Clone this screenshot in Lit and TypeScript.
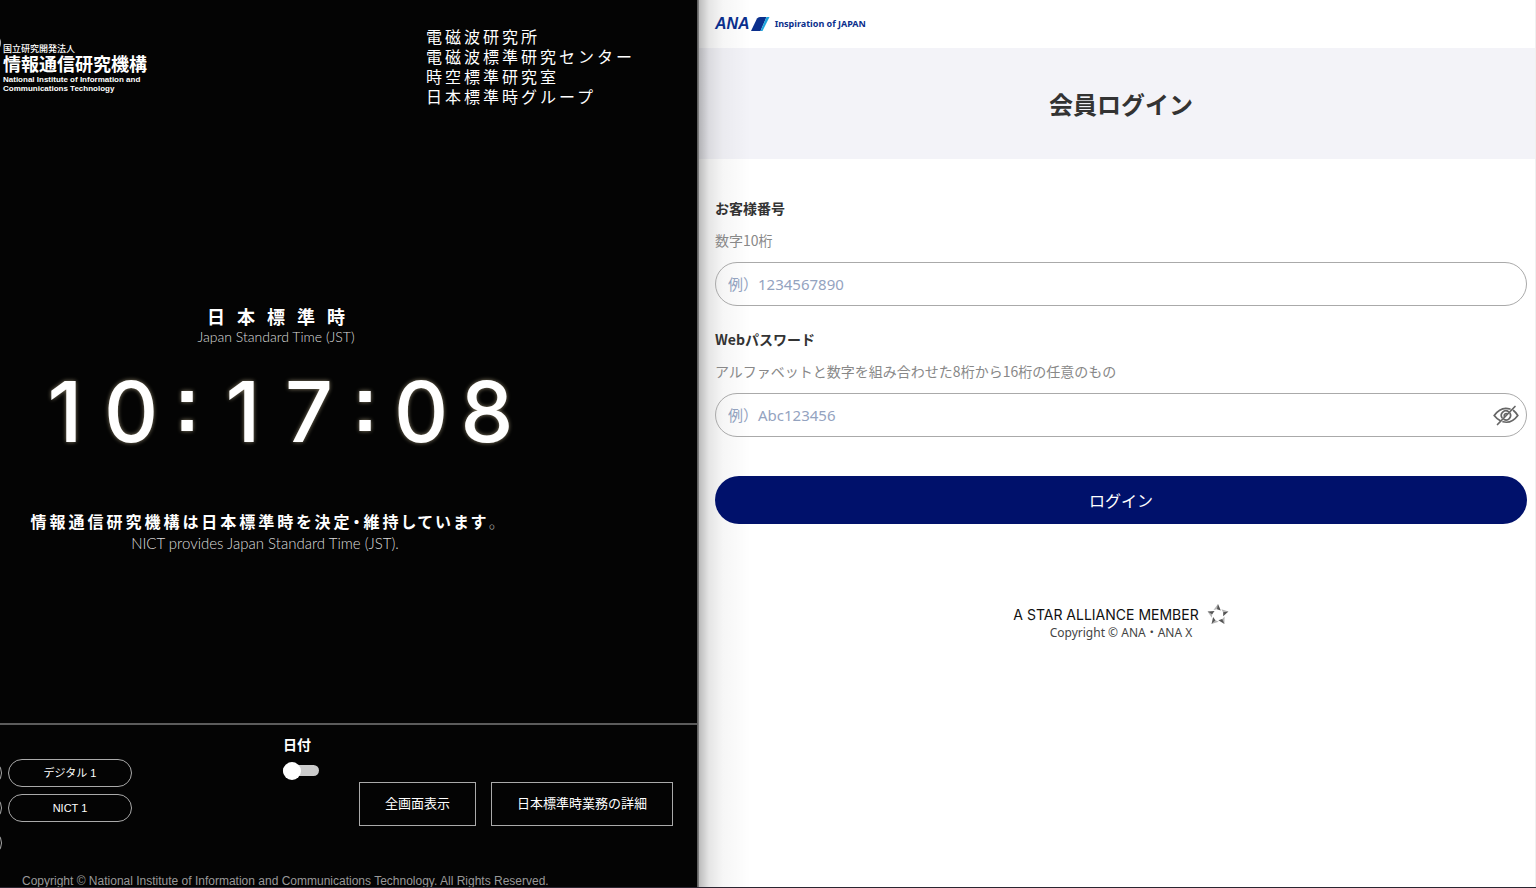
import { LitElement, html, css, svg } from "lit";
import { customElement, state } from "lit/decorators.js";

@customElement("jst-clock")
class JstClock extends LitElement {
  @state() private time = "10:17:08";

  static styles = css`
    :host {
      display: flex;
      flex-direction: column;
      min-width: 0;
      overflow: hidden;
      background: #040404;
      color: #fff;
      font-family: "Liberation Sans", "Noto Sans CJK JP", sans-serif;
    }
    * { box-sizing: border-box; }
    p, h1 { margin: 0; font-weight: 400; }
    header {
      display: flex;
      justify-content: space-between;
      align-items: flex-start;
      padding: 28px 62px 23px 0;
    }
    .brand { display: flex; gap: 1px; padding-top: 8px; }
    .arc { display: block; width: 2px; height: 16px; }
    .brand-text { padding-top: 8px; font-weight: 700; }
    .kind { font: 500 9px/11px "Liberation Sans", "Noto Sans CJK JP", sans-serif; }
    .name { font: 700 18px/20px "Liberation Sans", "Noto Sans CJK JP", sans-serif; }
    .en { font-size: 8px; line-height: 9px; font-weight: 700; }
    .dept {
      margin: 0;
      padding: 0;
      list-style: none;
      font: 400 16px/20px "Liberation Sans", "Noto Sans CJK JP", sans-serif;
      letter-spacing: 3px;
    }
    .stage {
      flex: 1;
      width: 552px;
      display: flex;
      flex-direction: column;
      justify-content: center;
      text-align: center;
    }
    .title {
      padding: 3px 0 0 12px;
      font: 700 18px/24px "Noto Sans CJK JP", sans-serif;
      letter-spacing: 12px;
    }
    .sub { font: 300 14px/18px Lato, sans-serif; color: #ddd; }
    .time {
      display: flex;
      justify-content: center;
      padding: 14px 0 45px;
      font: 500 84px/104px Inter, sans-serif;
      text-shadow: 0 0 4px #8a8068;
    }
    .digit { width: 66px; }
    .colon {
      width: 46px;
      font: 700 80px/88px "Liberation Sans", sans-serif;
    }
    .note { padding-right: 22px; }
    .note-ja {
      font: 700 16px/24px "Noto Sans CJK JP", sans-serif;
      letter-spacing: 3px;
      font-feature-settings: "palt";
    }
    .stop { font-weight: 300; color: #aaa; }
    .note-en { font: 300 15px/20px Lato, sans-serif; color: #ddd; }
    footer {
      border-top: 2px solid #5c5c5c;
      height: 164px;
      display: flex;
      flex-direction: column;
      justify-content: space-between;
    }
    .controls {
      display: flex;
      padding: 9px 24px 0 0;
    }
    .pills {
      display: grid;
      grid-template-columns: 124px 124px;
      grid-auto-rows: 28px;
      gap: 7px 6px;
      margin: 25px 0 0 -122px;
    }
    button {
      background: transparent;
      color: #fff;
      border: 1px solid #aaa;
      padding: 0;
    }
    .pill {
      border-radius: 14px;
      font: 400 11px/20px "Liberation Sans", "Noto Sans CJK JP", sans-serif;
    }
    .date {
      display: flex;
      flex-direction: column;
      align-items: flex-start;
      gap: 11px;
      margin-left: 151px;
      font: 700 14px/20px "Noto Sans CJK JP", sans-serif;
    }
    .switch {
      appearance: none;
      display: flex;
      align-items: center;
      margin: 0;
      width: 36px;
      height: 11px;
      border-radius: 6px;
      background: #ccc;
    }
    .switch::before {
      content: "";
      flex: none;
      width: 18px;
      height: 18px;
      border-radius: 50%;
      background: #fff;
    }
    .switch:checked { justify-content: flex-end; background: #6aa7ff; }
    .actions {
      margin-left: auto;
      padding-top: 48px;
      display: flex;
      align-items: flex-start;
      gap: 15px;
    }
    .box {
      height: 44px;
      padding: 0 25px 2px;
      font: 400 13px/20px "Noto Sans CJK JP", sans-serif;
      white-space: nowrap;
    }
    .copy {
      padding-left: 22px;
      font-size: 12px;
      line-height: 12px;
      color: #999;
      white-space: nowrap;
    }
  `;

  render() {
    return html`
      <header>
        <div class="brand">
          <svg class="arc" viewBox="0 0 2 16" aria-hidden="true">
            <path d="M-3 0C1 3 1 11-3 14" fill="none" stroke="#ddd" stroke-width="1.6" />
          </svg>
          <div class="brand-text">
            <p class="kind">国立研究開発法人</p>
            <p class="name">情報通信研究機構</p>
            <p class="en">National Institute of Information and<br />Communications Technology</p>
          </div>
        </div>
        <ul class="dept">
          <li>電磁波研究所</li>
          <li>電磁波標準研究センター</li>
          <li>時空標準研究室</li>
          <li>日本標準時グループ</li>
        </ul>
      </header>
      <main class="stage">
        <h1 class="title">日本標準時</h1>
        <p class="sub">Japan Standard Time (JST)</p>
        <div class="time" role="timer">
          ${[...this.time].map((c) => html`<span class=${c === ":" ? "colon" : "digit"}>${c}</span>`)}
        </div>
        <div class="note">
          <p class="note-ja">情報通信研究機構は日本標準時を決定・維持しています<span class="stop">。</span></p>
          <p class="note-en">NICT provides Japan Standard Time (JST).</p>
        </div>
      </main>
      <footer>
        <div class="controls">
          <div class="pills">
            <button class="pill" aria-label="アナログ"></button>
            <button class="pill">デジタル 1</button>
            <button class="pill" aria-label="デジタル"></button>
            <button class="pill">NICT 1</button>
            <button class="pill" aria-label="NICT"></button>
          </div>
          <label class="date">日付<input class="switch" type="checkbox" /></label>
          <div class="actions">
            <button class="box">全画面表示</button>
            <button class="box">日本標準時業務の詳細</button>
          </div>
        </div>
        <p class="copy">Copyright © National Institute of Information and Communications Technology. All Rights Reserved.</p>
      </footer>
    `;
  }
}

@customElement("member-login")
class MemberLogin extends LitElement {
  @state() private visible = false;

  static styles = css`
    :host {
      display: block;
      min-width: 0;
      border-right: 1px solid #f0f0f0;
      background:
        linear-gradient(90deg, #0004, #0000001a 10px, #00000009 24px, transparent 52px),
        linear-gradient(transparent 48px, #f3f3f8 48px, #f3f3f8 159px, transparent 159px),
        #fff;
      color: #333;
      font-family: "Noto Sans CJK JP", sans-serif;
    }
    * { box-sizing: border-box; }
    h1, p { margin: 0; }
    .bar {
      height: 48px;
      display: flex;
      align-items: center;
      padding-left: 16px;
    }
    .logo { display: flex; align-items: center; color: #0b2f8c; text-decoration: none; }
    .ana { font: italic 700 16px/20px "Liberation Sans", sans-serif; }
    .wing { display: block; width: 20px; height: 14px; }
    .tag { margin-left: 5px; font: 700 9px/20px "Noto Sans", sans-serif; }
    .title {
      height: 111px;
      padding: 0 8px 0 16px;
      display: grid;
      place-items: center;
      font-size: 24px;
      line-height: 36px;
      font-weight: 700;
    }
    form { padding: 39px 8px 0 16px; }
    .field { margin-bottom: 23px; }
    .label { display: block; font-size: 14px; line-height: 20px; font-weight: 700; }
    .hint { margin: 12px 0; font-size: 14px; line-height: 20px; color: #888; }
    .control {
      display: flex;
      align-items: center;
      height: 44px;
      padding: 0 7px 0 12px;
      border: 1px solid #aaa;
      border-radius: 22px;
      background: transparent;
    }
    input {
      flex: 1;
      min-width: 0;
      border: 0;
      padding: 0;
      outline: 0;
      background: transparent;
      color: #333;
      font: 400 15px/24px "Noto Sans", "Noto Sans CJK JP", sans-serif;
    }
    input::placeholder { color: #94a3bf; opacity: 1; }
    .eye { border: 0; padding: 0; background: none; width: 26px; height: 22px; }
    .eye svg { display: block; width: 26px; height: 22px; }
    .submit {
      display: block;
      width: 100%;
      height: 48px;
      margin-top: 39px;
      border: 0;
      border-radius: 24px;
      background: #00116b;
      color: #fff;
      font: 400 16px/24px "Noto Sans CJK JP", sans-serif;
    }
    footer { padding: 79px 8px 0 16px; text-align: center; }
    .member {
      display: flex;
      justify-content: center;
      align-items: center;
      gap: 8px;
      font: 400 14px/24px Inter, sans-serif;
      color: #111;
    }
    .star { display: block; width: 22px; height: 22px; }
    .copy { font: 400 12px/12px "Noto Sans", "Noto Sans CJK JP", sans-serif; color: #444; }
  `;

  render() {
    return html`
      <header class="bar">
        <a class="logo" href="#">
          <span class="ana">ANA</span>
          <svg class="wing" viewBox="0 0 20 14" aria-hidden="true">
            <path d="M1 14 7 1.500Q8 0 10 0H16.500L10.500 14Z" fill="#0b2f8c" />
            <path d="M10.500 14 16.500 0H19.500L12.500 14Z" fill="#1fa5dd" />
          </svg>
          <span class="tag">Inspiration of JAPAN</span>
        </a>
      </header>
      <h1 class="title">会員ログイン</h1>
      <form @submit=${(e: Event) => e.preventDefault()}>
        <div class="field">
          <label class="label" for="number">お客様番号</label>
          <p class="hint" id="number-hint">数字10桁</p>
          <div class="control">
            <input id="number" aria-describedby="number-hint" inputmode="numeric" placeholder="例）1234567890" />
          </div>
        </div>
        <div class="field">
          <label class="label" for="password">Webパスワード</label>
          <p class="hint" id="password-hint">アルファベットと数字を組み合わせた8桁から16桁の任意のもの</p>
          <div class="control">
            <input id="password" aria-describedby="password-hint" type=${this.visible ? "text" : "password"} placeholder="例）Abc123456" />
            <button class="eye" type="button" aria-label="パスワードを表示" @click=${() => (this.visible = !this.visible)}>
              <svg viewBox="0 0 26 22" fill="none" stroke="#666" stroke-width="1.7" stroke-linecap="round" aria-hidden="true">
                <path d="M17 5Q8 2 1.200 11.500Q3.500 14.500 7 16.500M10 17.800Q18.500 20 24.800 11.500Q23 8.500 20.500 6.500" />
                <path d="M15.500 7.700A4.500 4.500 0 0 0 9 13.700M11 15.400A4.500 4.500 0 0 0 17 9.200" />
                <path d="M14 9.800A2 2 0 0 0 11.300 12.200" />
                <path d="M22 2.500 4.500 20.500" />
              </svg>
            </button>
          </div>
        </div>
        <button class="submit">ログイン</button>
      </form>
      <footer>
        <p class="member">
          A STAR ALLIANCE MEMBER
          <svg class="star" viewBox="-11 -11 22 22" aria-hidden="true">
            ${[0, 72, 144, 216, 288].map(
              (a) => svg`<g transform="rotate(${a})">
                <path d="M0-11-4.500-5 0-6Z" fill="#b4b4b4" />
                <path d="M0-11-1-5.800 2.800-4.500Z" fill="#555" />
              </g>`
            )}
          </svg>
        </p>
        <p class="copy">Copyright © ANA・ANA X</p>
      </footer>
    `;
  }
}

@customElement("app-root")
class AppRoot extends LitElement {
  static styles = css`
    :host {
      display: grid;
      grid-template-columns: minmax(0, 697fr) 2px minmax(0, 837fr);
      box-sizing: border-box;
      min-height: 100vh;
      border-bottom: 1px solid #2b2631;
    }
    .divider { background: linear-gradient(90deg, #555, #888); }
  `;

  render() {
    return html`
      <jst-clock></jst-clock>
      <div class="divider"></div>
      <member-login></member-login>
    `;
  }
}
